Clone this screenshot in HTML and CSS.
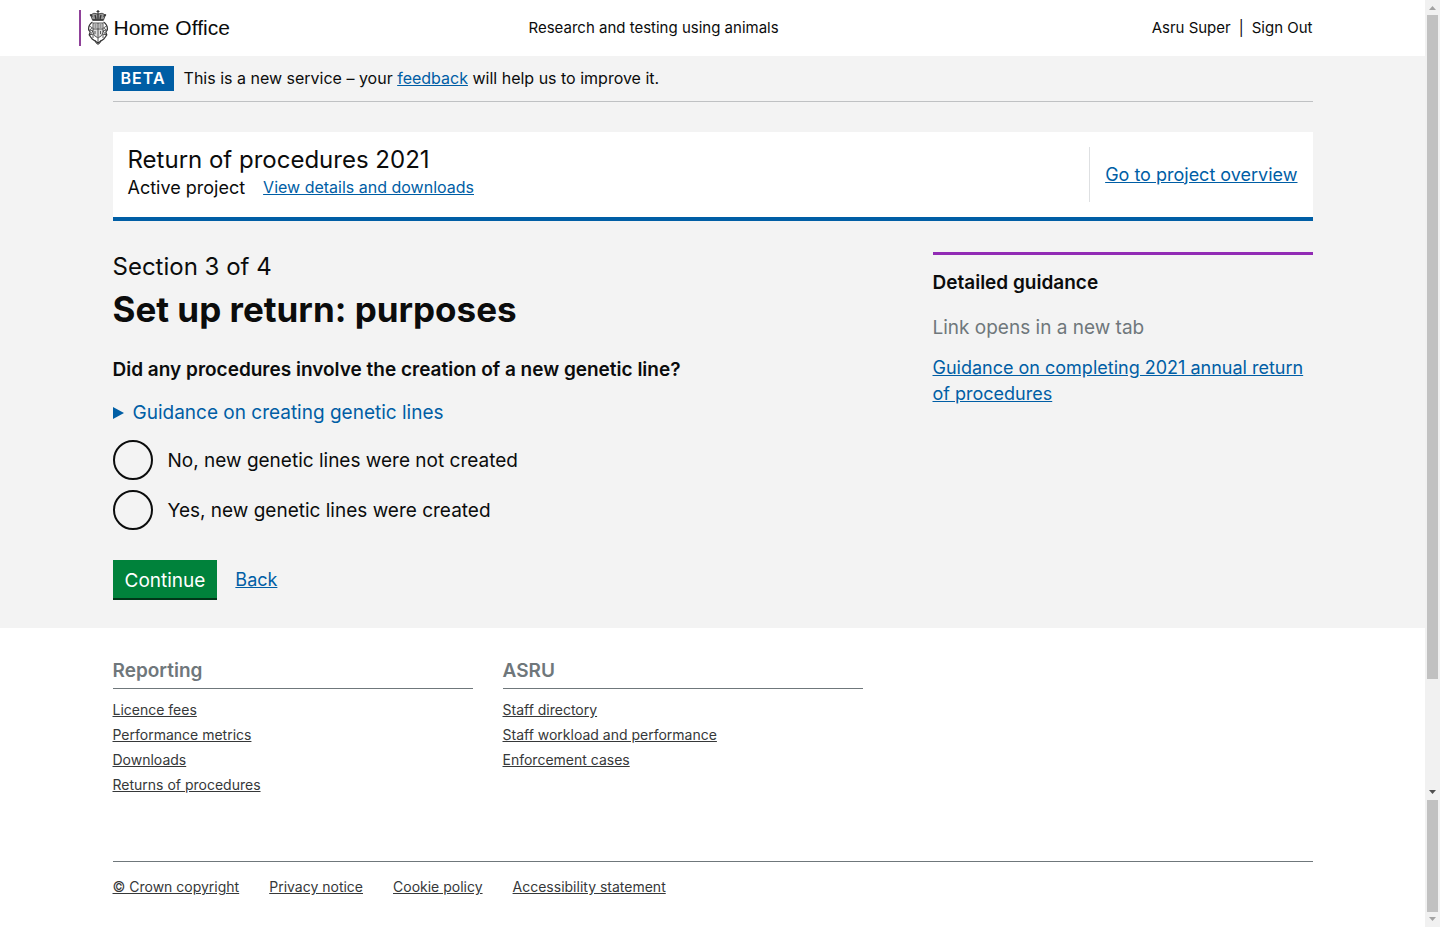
FILE: index.html
```html
<!DOCTYPE html>
<html lang="en">
<head>
<meta charset="utf-8">
<title>Set up return: purposes</title>
<link rel="stylesheet" href="styles.css">
</head>
<body>
<div class="page">
  <header class="header">
    <div class="container header-row">
      <a class="logo" href="#">
        <svg class="crest" width="20" height="36" viewBox="0 0 20 36" aria-hidden="true" fill="none" stroke="#333" stroke-width="0.800">
          <path d="M10 0v4M8.500 1.500h3" stroke-width="1.200"/>
          <path d="M2.500 5q3-3 7.500-1q4.500-2 7.500 1l-2 5h-11z" fill="#999"/>
          <path d="M2 4.500l2.500 2M18 4.500l-2.500 2M4.500 10h11M7 5l1 4M13 5l-1 4M10 4v5" stroke-width="1.300"/>
          <path d="M5 13h10v9q0 4-5 6q-5-2-5-6z" fill="#ddd"/>
          <path d="M10 13v14M5 19h10M6.500 15h2M11.500 15h2M6.500 17h2M11.500 17h2M7 21v3M12.500 21v3"/>
          <path d="M4.500 12Q0 15 .700 20l1.500 2l-1 3l3 4l5.800 4l5.800-4l3-4l-1-3l1.500-2q.700-5-3.800-8" stroke-width="1.200"/>
          <path d="M1.500 16l3 2l-3 2l3.500 1l-3 4l3-1v4M18.500 16l-3 2l3 2l-3.500 1l3 4l-3-1v4M7 30l1 3l2 1.500l2-1.500l1-3M10 28v6"/>
        </svg>
        <span>Home Office</span>
      </a>
      <span class="service">Research and testing using animals</span>
      <nav class="account"><a href="#">Asru Super</a><span>|</span><a href="#">Sign Out</a></nav>
    </div>
  </header>
  <main class="main">
    <div class="container">
      <div class="phase">
        <strong class="tag">BETA</strong>
        <span>This is a new service – your <a class="link" href="#">feedback</a> will help us to improve it.</span>
      </div>
      <section class="banner">
        <div>
          <h2 class="banner-title">Return of procedures 2021</h2>
          <div class="banner-status"><span>Active project</span><a class="link small" href="#">View details and downloads</a></div>
        </div>
        <div class="banner-side"><a class="link" href="#">Go to project overview</a></div>
      </section>
      <div class="columns">
        <form class="form">
          <div class="caption">Section 3 of 4</div>
          <h1 class="title">Set up return: purposes</h1>
          <fieldset class="question">
            <legend class="legend">Did any procedures involve the creation of a new genetic line?</legend>
            <details class="details"><summary class="summary">Guidance on creating genetic lines</summary></details>
            <div class="radio-row"><input class="radio" type="radio" name="lines" id="lines-no"><label for="lines-no">No, new genetic lines were not created</label></div>
            <div class="radio-row"><input class="radio" type="radio" name="lines" id="lines-yes"><label for="lines-yes">Yes, new genetic lines were created</label></div>
          </fieldset>
          <div class="actions"><button class="button" type="button">Continue</button><a class="link" href="#">Back</a></div>
        </form>
        <aside class="aside">
          <h2 class="aside-title">Detailed guidance</h2>
          <p class="hint">Link opens in a new tab</p>
          <a class="link" href="#">Guidance on completing 2021 annual return of procedures</a>
        </aside>
      </div>
    </div>
  </main>
  <footer class="footer">
    <div class="container">
      <div class="footer-nav">
        <section>
          <h2 class="footer-title">Reporting</h2>
          <ul class="footer-list">
            <li><a href="#">Licence fees</a></li>
            <li><a href="#">Performance metrics</a></li>
            <li><a href="#">Downloads</a></li>
            <li><a href="#">Returns of procedures</a></li>
          </ul>
        </section>
        <section>
          <h2 class="footer-title">ASRU</h2>
          <ul class="footer-list">
            <li><a href="#">Staff directory</a></li>
            <li><a href="#">Staff workload and performance</a></li>
            <li><a href="#">Enforcement cases</a></li>
          </ul>
        </section>
      </div>
      <ul class="footer-meta">
        <li><a href="#">© Crown copyright</a></li>
        <li><a href="#">Privacy notice</a></li>
        <li><a href="#">Cookie policy</a></li>
        <li><a href="#">Accessibility statement</a></li>
      </ul>
    </div>
  </footer>
</div>
<div class="scrollbars" aria-hidden="true">
  <div class="track track-upper">
    <svg class="arrow" width="15" height="15" viewBox="0 0 15 15"><path d="M4 10h7L7.500 6z" fill="#a3a3a3"/></svg>
    <div class="thumb thumb-upper"></div>
    <svg class="arrow arrow-end" width="15" height="15" viewBox="0 0 15 15"><path d="M4 5h7L7.500 9z" fill="#505050"/></svg>
  </div>
  <div class="track track-lower">
    <div class="thumb thumb-lower"></div>
    <svg class="arrow" width="15" height="15" viewBox="0 0 15 15"><path d="M4 5h7L7.500 9z" fill="#a3a3a3"/></svg>
  </div>
</div>
</body>
</html>
```
FILE: styles.css
```css
* { box-sizing: border-box; }
body {
  margin: 0;
  display: grid;
  grid-template-columns: minmax(0, 1fr) 15px;
  min-height: 100vh;
  font-family: Inter, sans-serif;
  font-size: 18px;
  line-height: 26px;
  color: #0b0c0c;
  background: #fff;
}
h1, h2, p, ul, fieldset { margin: 0; padding: 0; }
ul { list-style: none; }
a { color: inherit; }
.link { color: #005ea5; }
.container { max-width: 1200px; margin: 0 auto; }

.header { font-size: 15px; }
.header-row { display: grid; grid-template-columns: 416px 1fr auto; align-items: start; padding: 10px 0; line-height: 36px; }
.logo {
  display: flex;
  align-items: center;
  gap: 6px;
  height: 36px;
  margin-left: -34px;
  padding-left: 7px;
  border-left: 2px solid #8f4199;
  font: 21px/36px "Liberation Sans", Arial, sans-serif;
  color: #0b0c0c;
  text-decoration: none;
}
.account { display: flex; gap: 8px; }
.account a { text-decoration: none; }

.main { background: #f3f3f3; padding-bottom: 28px; }
.phase { display: flex; align-items: center; gap: 10px; padding: 10px 0; border-bottom: 1px solid #bfc1c3; font-size: 16px; line-height: 25px; }
.tag { padding: 0 8px; background: #005ea5; color: #fff; letter-spacing: 1px; font-weight: 600; }
.banner { display: flex; justify-content: space-between; margin-top: 30px; padding: 15px; background: #fff; border-bottom: 4px solid #005ea5; }
.banner-title { font-size: 24px; line-height: 26px; font-weight: 400; }
.banner-status { display: flex; gap: 18px; line-height: 29px; }
.small { font-size: 16px; }
.banner-side { display: flex; align-items: center; padding-left: 15px; border-left: 1px solid #dee0e2; }

.columns { display: grid; grid-template-columns: minmax(0, 1fr) 380px; gap: 30px; margin-top: 31px; }
.caption { font-size: 24px; line-height: 30px; }
.title { margin-top: 7px; font-size: 35px; line-height: 40px; font-weight: 700; }
.question { margin-top: 28px; border: 0; font-size: 19px; line-height: 25px; }
.legend { padding: 0; font-weight: 600; }
.details { margin: 18px 0 15px; }
.summary { display: flex; align-items: center; gap: 9px; color: #005ea5; }
.summary::before { content: ""; border-style: solid; border-width: 6px 0 6px 11px; border-color: transparent transparent transparent #005ea5; }
.radio-row { display: flex; align-items: center; gap: 15px; }
.radio-row + .radio-row { margin-top: 10px; }
.radio { appearance: none; width: 40px; height: 40px; margin: 0; border: 2px solid #0b0c0c; border-radius: 50%; }
.radio:checked { background: radial-gradient(#0b0c0c 10px, transparent 11px); }
.actions { display: flex; align-items: center; gap: 18px; margin-top: 30px; }
.button { height: 40px; padding: 2px 12px 0; border: 0; border-bottom: 2px solid #003618; background: #00823b; color: #fff; font: 19px/25px Inter, sans-serif; }
.aside { border-top: 3px solid #912bb4; padding-top: 15px; }
.aside-title { font-size: 19px; line-height: 25px; font-weight: 600; }
.hint { margin: 20px 0 15px; font-size: 19px; line-height: 25px; color: #6f777b; }

.footer { padding: 30px 0 28px; font-size: 14px; line-height: 25px; color: #363839; }
.footer-nav { display: grid; grid-template-columns: repeat(2, 30%); gap: 30px; }
.footer-title { padding-bottom: 5px; border-bottom: 1px solid #6f777b; color: #6f777b; font-size: 19px; line-height: 25px; font-weight: 600; }
.footer-list { padding-top: 8px; }
.footer-meta { display: flex; gap: 30px; margin-top: 64px; padding-top: 12px; border-top: 1px solid #6f777b; }

.scrollbars { display: flex; flex-direction: column; background: #f1f1f1; }
.track { display: flex; flex-direction: column; }
.track-upper { flex: 800; }
.track-lower { flex: 127; }
.arrow { flex: none; display: block; }
.arrow-end { margin-top: auto; }
.thumb { margin: 0 2px; background: #c1c1c1; }
.thumb-upper { height: 83%; }
.thumb-lower { flex: 1; }
```
